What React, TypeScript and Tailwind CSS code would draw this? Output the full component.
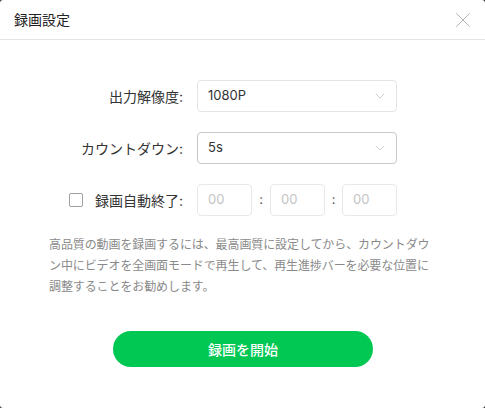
import { X, ChevronDown } from "lucide-react";

const font = { fontFamily: 'Inter, "Noto Sans CJK JP", sans-serif' };

function SelectBox({ value, dark }: { value: string; dark?: boolean }) {
  return (
    <div
      className={`flex h-8 w-[200px] items-center justify-between rounded-[4px] border pl-[10px] pr-[8px] ${
        dark ? "border-[#c8c8c8]" : "border-[#e4e4e4]"
      }`}
    >
      <span className="text-[13px] text-[#333]">{value}</span>
      <ChevronDown size={16} strokeWidth={1} className="text-[#b5b5b5]" />
    </div>
  );
}

function TimeBox() {
  return (
    <div className="flex h-8 w-[55px] items-center rounded-[4px] border border-[#e8e8e8] px-[10px] text-[13px] text-[#c4c4c4]">
      00
    </div>
  );
}

export default function App() {
  return (
    <div className="h-[408px] w-[485px] bg-[#2a2a2a]" style={font}>
      <div className="flex h-full w-full flex-col rounded-[3px] bg-white">
        {/* Header */}
        <div className="flex h-10 items-center justify-between border-b border-[#e3e3e3] pl-[14px] pr-[9px]">
          <h1 className="text-[14px] text-[#222]">録画設定</h1>
          <X size={26} strokeWidth={0.8} className="text-[#a8a8a8]" />
        </div>

        {/* Form */}
        <div className="flex flex-col gap-5 pt-10">
          <div className="flex items-center">
            <div className="w-[183px] text-right text-[14px] text-[#333]">出力解像度:</div>
            <div className="ml-[14px]">
              <SelectBox value="1080P" />
            </div>
          </div>
          <div className="flex items-center">
            <div className="w-[183px] text-right text-[14px] text-[#333]">カウントダウン:</div>
            <div className="ml-[14px]">
              <SelectBox value="5s" dark />
            </div>
          </div>
          <div className="flex items-center">
            <div className="flex w-[183px] items-center justify-end">
              <div className="mr-3 h-[14px] w-[14px] rounded-[2px] border border-[#a0a0a0]" />
              <span className="text-[14px] text-[#333]">録画自動終了:</span>
            </div>
            <div className="ml-[14px] flex items-center">
              <TimeBox />
              <span className="w-[18px] text-center text-[13px] text-[#555]">:</span>
              <TimeBox />
              <span className="w-[17px] text-center text-[13px] text-[#555]">:</span>
              <TimeBox />
            </div>
          </div>
        </div>

        <p className="mt-[18px] whitespace-nowrap px-[49px] text-[12px] leading-[21px] tracking-[-0.1px] text-[#8a8a8a]">
          高品質の動画を録画するには、最高画質に設定してから、カウントダウ
          <br />
          ン中にビデオを全画面モードで再生して、再生進捗バーを必要な位置に
          <br />
          調整することをお勧めします。
        </p>

        <div className="mt-[34px] flex justify-center">
          <button className="ml-[1px] h-9 w-[260px] rounded-full bg-[#00c853] text-[14px] font-medium text-white">
            録画を開始
          </button>
        </div>
      </div>
    </div>
  );
}
